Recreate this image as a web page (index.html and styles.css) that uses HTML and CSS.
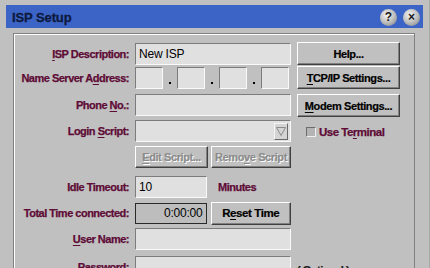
FILE: index.html
```html
<!DOCTYPE html>
<html>
<head>
<meta charset="utf-8">
<link rel="stylesheet" href="styles.css">
</head>
<body>
<div class="window">
  <div class="titlebar">
    <span class="title">ISP Setup</span>
    <div class="tb-buttons">
      <span class="tb-btn">?</span>
      <span class="tb-btn">&#215;</span>
    </div>
  </div>
  <div class="panel">
    <div class="row">
      <label class="lbl"><u>I</u>SP Description:</label>
      <div class="field"><span class="val">New ISP</span></div>
      <button class="btn side">Help...</button>
    </div>
    <div class="row gap2">
      <label class="lbl">Name Server A<u>d</u>dress:</label>
      <div class="ip">
        <div class="field oct"></div><span class="dot"></span>
        <div class="field oct"></div><span class="dot"></span>
        <div class="field oct"></div><span class="dot"></span>
        <div class="field oct"></div>
      </div>
      <button class="btn side"><u>T</u>CP/IP Settings...</button>
    </div>
    <div class="row gap4">
      <label class="lbl">Phone <u>N</u>o.:</label>
      <div class="field"></div>
      <button class="btn side low"><u>M</u>odem Settings...</button>
    </div>
    <div class="row gap5">
      <label class="lbl">Login <u>S</u>cript:</label>
      <div class="field combo">
        <span class="arrow"><svg width="10" height="9" viewBox="0 0 10 9"><polygon points="0.5,0.5 9.5,0.5 5,8.5" fill="none" stroke="#8a8a8a" stroke-width="1"/></svg></span>
      </div>
      <div class="check"><span class="box"></span><span class="chk-lbl">Use Te<u>r</u>minal</span></div>
    </div>
    <div class="row gap4">
      <span class="lbl"></span>
      <div class="pair">
        <button class="btn dis narrow"><u>E</u>dit Script...</button>
        <button class="btn dis wide">Remo<u>v</u>e Script</button>
      </div>
    </div>
    <div class="row gap8">
      <label class="lbl">Idle Timeout:</label>
      <div class="pair">
        <div class="field short"><span class="val">10</span></div>
        <span class="unit">Minutes</span>
      </div>
    </div>
    <div class="row gap4">
      <label class="lbl">Total Time connected:</label>
      <div class="pair">
        <div class="timebox">0:00:00</div>
        <button class="btn reset">R<u>e</u>set Time</button>
      </div>
    </div>
    <div class="row gap4">
      <label class="lbl"><u>U</u>ser Name:</label>
      <div class="field"></div>
    </div>
    <div class="row gap6">
      <label class="lbl">Password:</label>
      <div class="field"></div>
      <span class="opt">( Optional )</span>
    </div>
  </div>
</div>
</body>
</html>
```
FILE: styles.css
```css
* { box-sizing: border-box; }
html, body {
  margin: 0;
  padding: 0;
  background: #c0c0c0;
  overflow: hidden;
}
.window {
  width: 430px;
  height: 268px;
  padding: 5px 6px 0 6px;
  background: #c0c0c0;
  border-right: 1px solid #a8a8a8;
  font-family: "Liberation Sans", Arial, sans-serif;
  overflow: hidden;
}
.titlebar {
  height: 23px;
  background: #3b64c6;
  display: flex;
  align-items: center;
  justify-content: space-between;
  padding: 0 3px 0 6px;
}
.title {
  font-weight: bold;
  font-size: 13px;
  color: #0d1a40;
  letter-spacing: -0.1px;
  margin-top: 1px;
  -webkit-text-stroke: 0.3px #0d1a40;
}
.tb-buttons {
  display: flex;
  gap: 6px;
  margin-top: 1px;
}
.tb-btn {
  width: 17px;
  height: 17px;
  border-radius: 50%;
  background: radial-gradient(circle at 40% 35%, #f4f4f4 0%, #c4c4c4 45%, #8a8a8a 90%, #6a6a6a 100%);
  display: flex;
  align-items: center;
  justify-content: center;
  font-weight: bold;
  font-size: 12px;
  color: #1a1a1a;
  line-height: 1;
}
.panel {
  margin: 5px 8px 0 7px;
  height: 260px;
  border: 1px solid #808080;
  box-shadow: inset 1px 1px 0 #ffffff;
  padding: 9px 0 0 1px;
}
.row {
  display: grid;
  grid-template-columns: 115px 156px 103px;
  column-gap: 5px;
  height: 22px;
  align-items: center;
}
.gap2 { margin-top: 2px; }
.gap4 { margin-top: 4px; }
.gap5 { margin-top: 5px; }
.gap6 { margin-top: 6px; }
.gap8 { margin-top: 8px; }
.lbl, .unit, .chk-lbl, .opt {
  font-weight: bold;
  font-size: 11px;
  letter-spacing: -0.5px;
  color: #5e0b36;
  white-space: nowrap;
  -webkit-text-stroke: 0.25px #5e0b36;
}
.lbl {
  text-align: right;
  padding-right: 1px;
}
u {
  text-decoration: underline;
  text-decoration-thickness: 1px;
  text-underline-offset: 2px;
}
.field {
  height: 22px;
  background: #e0e0e0;
  border: 1px solid;
  border-color: #7c7c7c #fafafa #fafafa #7c7c7c;
  display: flex;
  align-items: center;
  padding-left: 3px;
}
.val {
  font-size: 12px;
  color: #000;
  letter-spacing: -0.2px;
}
.ip {
  display: flex;
  align-items: flex-end;
  height: 22px;
}
.oct { width: 28px; padding: 0; }
.dot {
  width: 2px;
  height: 2px;
  background: #000;
  margin: 0 6px 5px 6px;
}
.btn {
  font-family: "Liberation Sans", Arial, sans-serif;
  font-weight: bold;
  font-size: 11px;
  letter-spacing: -0.4px;
  color: #000;
  background: #c0c0c0;
  border: 1px solid;
  border-color: #ffffff #404040 #404040 #ffffff;
  box-shadow: inset -1px -1px 0 #808080;
  height: 23px;
  padding: 0;
  margin: 0;
  white-space: nowrap;
  -webkit-text-stroke: 0.2px #000;
}
.side {
  margin-left: 1px;
  width: 103px;
  height: 23px;
  align-self: start;
  margin-top: -1px;
}
.low { margin-top: 1px; }
.combo {
  justify-content: flex-end;
  padding-right: 2px;
}
.arrow {
  width: 14px;
  height: 17px;
  background: #d4d4d4;
  border: 1px solid;
  border-color: #f4f4f4 #6a6a6a #6a6a6a #f4f4f4;
  display: flex;
  align-items: center;
  justify-content: center;
}
.check {
  display: flex;
  align-items: center;
  margin-left: 10px;
  margin-top: 1px;
}
.box {
  width: 10px;
  height: 10px;
  background: #b4b4b4;
  border: 1px solid;
  border-color: #6c6c6c #f0f0f0 #f0f0f0 #6c6c6c;
  margin-right: 3px;
}
.chk-lbl { font-size: 11.5px; }
.pair {
  display: flex;
  align-items: center;
  height: 22px;
}
.dis {
  color: #8c8c8c;
  text-shadow: 1px 1px 0 #ffffff;
  height: 22px;
  -webkit-text-stroke: 0.2px #8c8c8c;
}
.narrow { width: 73px; }
.wide { width: 80px; margin-left: 3px; }
.short { width: 72px; }
.unit { margin-left: 11px; }
.timebox {
  width: 72px;
  height: 21px;
  background: #bdbdbd;
  border: 1px solid #2a2a2a;
  font-size: 12px;
  color: #000;
  text-align: right;
  padding-right: 3px;
  line-height: 19px;
  letter-spacing: -0.2px;
}
.reset {
  width: 81px;
  height: 23px;
  margin-left: 4px;
  font-size: 11.5px;
}
.opt {
  color: #202020;
  -webkit-text-stroke: 0.25px #202020;
  margin-left: 1px;
  margin-top: 5px;
}
```
